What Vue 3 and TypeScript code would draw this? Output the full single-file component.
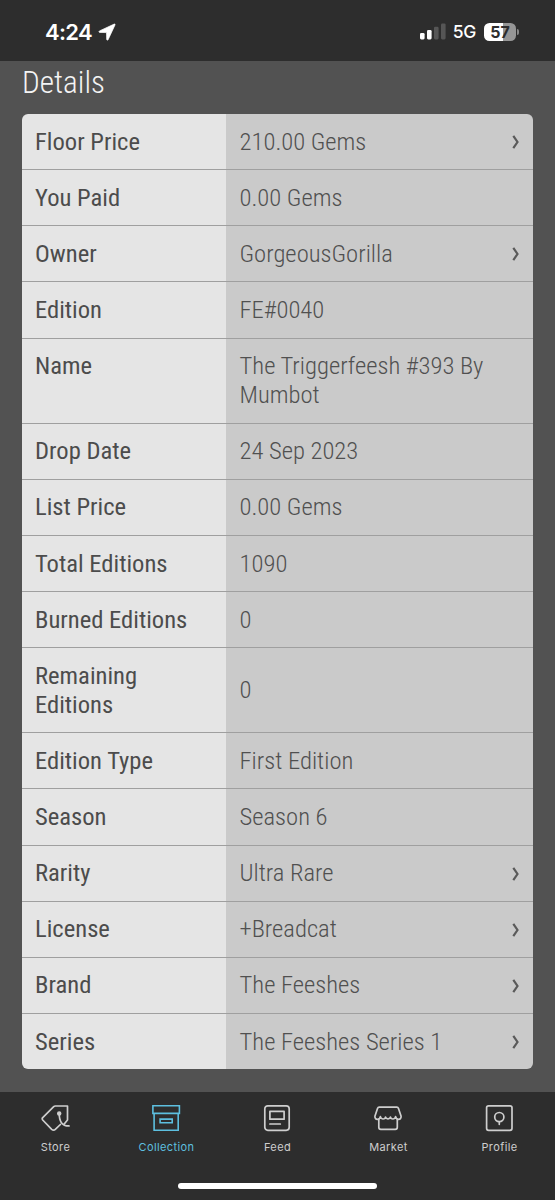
<script setup lang="ts">
interface Detail {
  label: string
  value: string
  link?: boolean
}

const details: Detail[] = [
  { label: 'Floor Price', value: '210.00 Gems', link: true },
  { label: 'You Paid', value: '0.00 Gems' },
  { label: 'Owner', value: 'GorgeousGorilla', link: true },
  { label: 'Edition', value: 'FE#0040' },
  { label: 'Name', value: 'The Triggerfeesh #393 By Mumbot' },
  { label: 'Drop Date', value: '24 Sep 2023' },
  { label: 'List Price', value: '0.00 Gems' },
  { label: 'Total Editions', value: '1090' },
  { label: 'Burned Editions', value: '0' },
  { label: 'Remaining Editions', value: '0' },
  { label: 'Edition Type', value: 'First Edition' },
  { label: 'Season', value: 'Season 6' },
  { label: 'Rarity', value: 'Ultra Rare', link: true },
  { label: 'License', value: '+Breadcat', link: true },
  { label: 'Brand', value: 'The Feeshes', link: true },
  { label: 'Series', value: 'The Feeshes Series 1', link: true },
]

const tabs: string[] = ['Store', 'Collection', 'Feed', 'Market', 'Profile']
</script>

<template>
  <div class="screen">
    <header class="status">
      <div class="clock">
        <span>4:24</span>
        <svg class="arrow" width="18" height="18" viewBox="0 0 18 18">
          <path d="M16.2 1.1 1.5 7.9c-.8.5-.6 1.4.2 1.5l6.8.2.2 6.8c.1.9 1 1 1.4.3L17 1.9c.3-.7-.2-1.1-.8-.8Z" fill="#fff" stroke="#fff" stroke-width=".7" />
        </svg>
      </div>
      <div class="signals">
        <svg width="26" height="17" viewBox="0 0 26 17">
          <rect x="0" y="10" width="4.6" height="6.4" rx="1.3" fill="#fff" />
          <rect x="7" y="7" width="4.6" height="9.4" rx="1.3" fill="#fff" />
          <rect x="14" y="3.7" width="4.6" height="12.7" rx="1.3" fill="#565656" />
          <rect x="21" y="0.4" width="4.6" height="16" rx="1.3" fill="#565656" />
        </svg>
        <span class="network">5G</span>
        <div class="battery"><span>57</span></div>
        <i class="nub"></i>
      </div>
    </header>

    <main class="content">
      <h1>Details</h1>
      <dl class="table">
        <div v-for="row in details" :key="row.label" class="row">
          <dt>{{ row.label }}</dt>
          <dd>
            <span>{{ row.value }}</span>
            <svg v-if="row.link" class="chevron" width="8" height="14" viewBox="0 0 8 14">
              <path d="M1.3 .8 5.5 7l-4.2 6.2" fill="none" stroke="#5a5a5a" stroke-width="2.2" />
            </svg>
          </dd>
        </div>
      </dl>
    </main>

    <nav class="tabs">
      <div v-for="tab in tabs" :key="tab" class="tab" :class="{ active: tab === 'Collection' }">
        <svg class="icon" width="30" height="28" viewBox="0 0 30 28" fill="none" stroke="currentColor" stroke-width="1.7" stroke-linejoin="round" stroke-linecap="round">
          <template v-if="tab === 'Store'">
            <path d="M24 20.2 27.5 16V2H15.3q-.9 0-1.6.7L2.7 13.6q-1 1.2 0 2.4l9 9.3q1.9 1.7 3.6.1l5.1-4.9" />
            <circle cx="19.2" cy="9.4" r="1.4" fill="currentColor" />
            <path d="M19.2 9.6c0 7.6 2.6 12.4 9.8 12.3" />
          </template>
          <g v-else-if="tab === 'Collection'" stroke-linejoin="miter" stroke-width="1.6">
            <path d="M1.9 1.8h26.5v7.6H1.9ZM3.1 9.4v16.9h24.1V9.4M9.1 15.1h12.1v3.7H9.1Z" />
          </g>
          <template v-else-if="tab === 'Feed'">
            <rect x="2.8" y="1.8" width="24.4" height="24.5" rx="3" />
            <path d="M7.9 7.4h14.2v7.8H7.9ZM7.9 20h10.4" />
          </template>
          <template v-else-if="tab === 'Market'">
            <path d="M6.1 3.2h17.8q1.1 0 1.5 1l2.7 8.1c.2 4.1-4.8 4-5.5.4-.7 3-4.4 3-5.1.4-.7 2.4-4.3 2.4-5 0-.7 2.6-4.4 2.6-5.1-.4-.7 3.6-5.7 3.7-5.5-.4l2.7-8.1q.4-1 1.5-1Z" />
            <path d="M5.8 15.3v8q0 2 2 2h14.5q2 0 2-2v-8" />
          </template>
          <template v-else>
            <rect x="2.6" y="1.8" width="25.4" height="24.5" rx="2" />
            <circle cx="15.3" cy="13.1" r="4.6" />
            <path d="M15.3 17.8v2.5" />
          </template>
        </svg>
        <span>{{ tab }}</span>
      </div>
      <div class="home"></div>
    </nav>
  </div>
</template>

<style>
body {
  background: #525252;
}
</style>

<style scoped>
.screen {
  box-sizing: border-box;
  width: 555px;
  height: 1200px;
  display: flex;
  flex-direction: column;
  overflow: hidden;
  background: #525252;
}
.status {
  height: 61px;
  flex: none;
  box-sizing: border-box;
  padding: 2px 36px 0 45px;
  display: flex;
  align-items: center;
  justify-content: space-between;
  background: #2d2d2d;
  color: #fff;
  font-family: Inter, sans-serif;
}
.clock {
  display: flex;
  align-items: center;
  gap: 6.5px;
  font-size: 22px;
  font-weight: 600;
  letter-spacing: -0.7px;
}
.signals {
  display: flex;
  align-items: center;
}
.network {
  margin-left: 7px;
  font-size: 17.5px;
  font-weight: 500;
  letter-spacing: -0.3px;
}
.battery {
  margin-left: 8px;
  width: 32px;
  height: 18px;
  border-radius: 5.5px;
  background: linear-gradient(90deg, #fff 58%, #969696 58%);
  color: #2d2d2d;
  font-size: 16px;
  line-height: 18px;
  font-weight: 700;
  text-align: center;
}
.nub {
  width: 2px;
  height: 6px;
  margin-left: 1px;
  border-radius: 0 2px 2px 0;
  background: #888;
}
.content {
  flex: none;
  height: 1031px;
  box-sizing: border-box;
  padding: 0 22px;
  font-family: "Roboto Condensed", Roboto, sans-serif;
  font-stretch: 75%;
}
h1 {
  margin: 0;
  height: 53px;
  font-size: 31.2px;
  font-weight: 300;
  line-height: 44px;
  color: #f4f4f4;
}
.table {
  margin: 0;
  overflow: hidden;
  border-radius: 6px;
}
.row {
  display: grid;
  grid-template-columns: 204.5px 1fr;
  border-bottom: 1px solid #9f9f9f;
  background: linear-gradient(90deg, #e5e5e5 204.5px, #cacaca 204.5px);
  font-size: 24.6px;
  line-height: 28.9px;
}
.row:last-child {
  border-bottom: 0;
}
dt,
dd {
  margin: 0;
  padding: 13.7px 13px 12.55px;
}
dt {
  padding-right: 60px;
  font-weight: 400;
  color: #4c4c4c;
}
.row:not(:nth-child(10)) dt {
  padding-right: 0;
}
dd {
  display: flex;
  align-items: center;
  justify-content: space-between;
  font-weight: 300;
  color: #505050;
}
.tabs {
  position: relative;
  flex: 1;
  display: grid;
  grid-template-columns: repeat(5, 1fr);
  background: #2d2d2d;
}
.tab {
  display: flex;
  flex-direction: column;
  align-items: center;
  padding-top: 12px;
  color: #cecece;
  font-family: Inter, sans-serif;
  font-size: 11px;
  line-height: 14px;
  letter-spacing: 0.4px;
}
.icon {
  margin: 0 1px 8px 0;
}
.active {
  color: #5dbfdf;
}
.home {
  position: absolute;
  left: 178px;
  bottom: 11px;
  width: 199px;
  height: 6px;
  border-radius: 3px;
  background: #fff;
}
</style>
